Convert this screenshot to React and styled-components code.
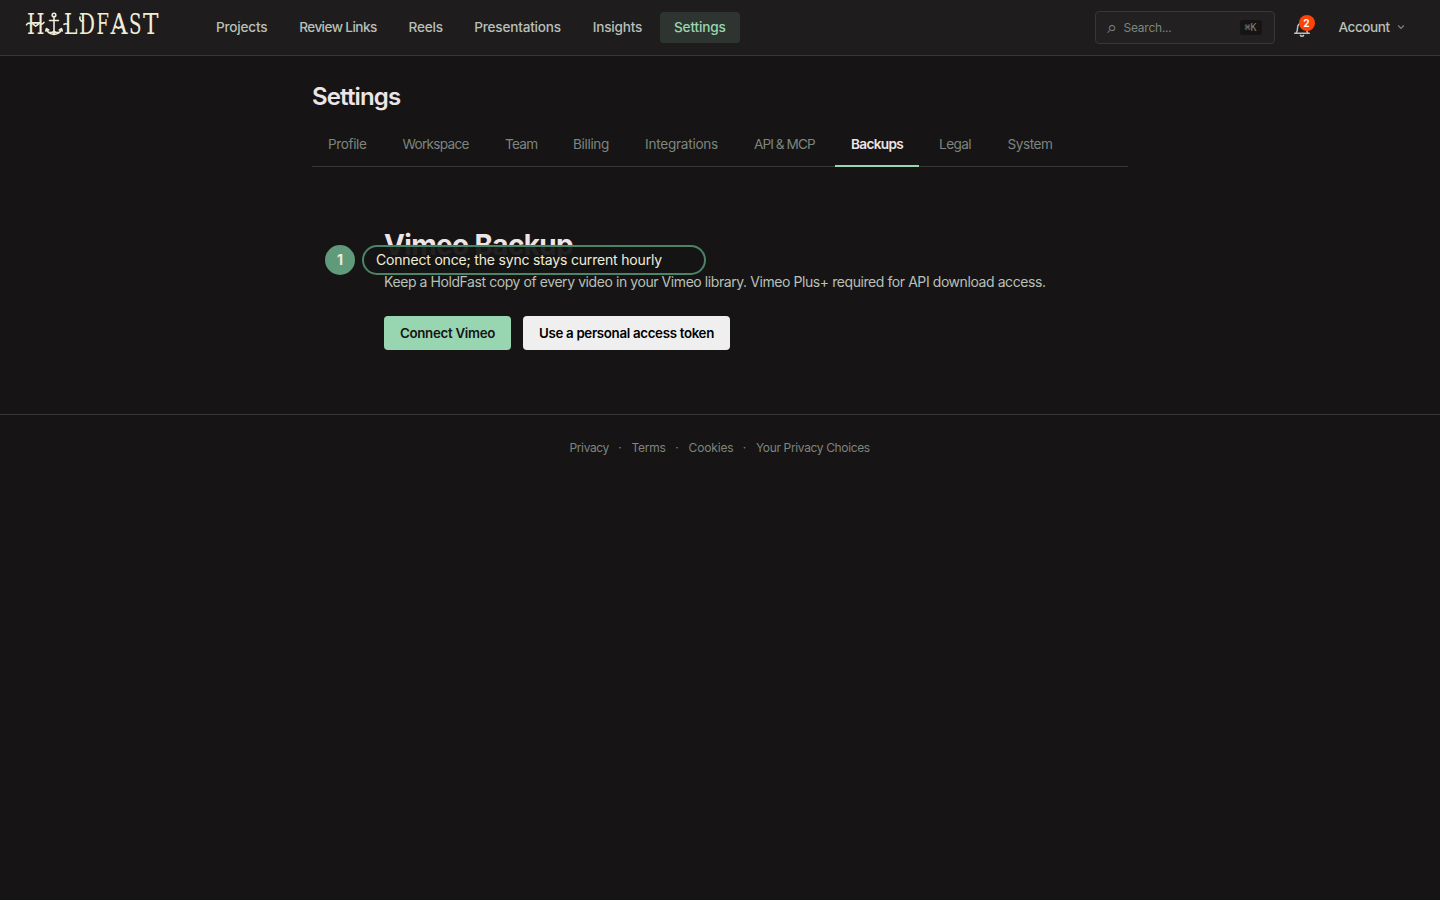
import React from 'react';
import styled, { createGlobalStyle } from 'styled-components';

const navItems = [
    { label: 'Projects', width: 51.2, track: -0.2 },
    { label: 'Review Links', width: 77.3, track: -0.58 },
    { label: 'Reels', width: 33.7, track: -0.2 },
    { label: 'Presentations', width: 86.6, track: -0.2 },
    { label: 'Insights', width: 49.2, track: -0.2 },
    { label: 'Settings', width: 52, track: -0.15, active: true },
];

const tabs = [
    { label: 'Profile', width: 38.5, track: -0.4 },
    { label: 'Workspace', width: 66.5, track: -0.7 },
    { label: 'Team', width: 32, track: -0.75 },
    { label: 'Billing', width: 36, track: -0.34 },
    { label: 'Integrations', width: 73, track: -0.26 },
    { label: 'API & MCP', width: 61, track: -0.92 },
    { label: 'Backups', width: 52, track: -0.66, active: true },
    { label: 'Legal', width: 32.5, track: -0.56 },
    { label: 'System', width: 45, track: -0.44 },
];

const footerLinks = [
    { label: 'Privacy', width: 39, track: -0.38 },
    { label: 'Terms', width: 34, track: -0.27 },
    { label: 'Cookies', width: 44.5, track: -0.14 },
    { label: 'Your Privacy Choices', width: 114.5, track: -0.36 },
];

// x position and width of each wordmark letter
const letters = [
    ['H', 27, 17.5],
    ['L', 64, 13.5],
    ['D', 79, 16],
    ['F', 96.5, 12.5],
    ['A', 110.5, 17],
    ['S', 129, 12.5],
    ['T', 143, 15.5],
];

const Logo = () => (
    <LogoSvg viewBox="24 8 138 32" aria-label="Holdfast">
        {letters.map(([char, x, width]) => (
            <text key={char} x={x} y="33.8" textLength={width} lengthAdjust="spacingAndGlyphs">
                {char}
            </text>
        ))}
        <g fill="none" stroke="#f0edd8" strokeWidth="1.6" strokeLinecap="round" strokeLinejoin="round">
            <circle cx="54" cy="15" r="1.8" />
            <path d="M54 17v17M49.5 20.5h9M46.5 29.2c1 3 4 4.8 7.5 5.2c3.5-.4 6.5-2.2 7.5-5.2" />
            <path d="M50 32.2c1.3.4 2.7.4 4-.8c1.300 1.200 2.700 1.200 4 .8" />
            <path d="M45.8 31l.7-2.4 2.2 1.4M62.2 31l-.7-2.4-2.2 1.4" />
            <path d="M26.5 24.8c1-1.6 2.4-2 4-1.200M33 24.200l2.700 2 2.700-2M40 23.600c1.600.9 3 .4 4-1.200" />
            <path d="M80 17c-.8 3 1.2 5.4 3.4 3.4M64 24.3c1.3-.8 2.4-.8 3.8 0M115 25.5l3.5 3 3.5-3" />
        </g>
    </LogoSvg>
);

const Bell = () => (
    <BellSvg viewBox="0 0 18 18">
        <path d="M1.7 13.2h14.6M3.2 13c1-1.2 1.3-2.5 1.3-4.8 0-3 1.6-5 4.5-5s4.5 2 4.5 5c0 2.3.3 3.6 1.3 4.8" />
        <path d="M7.4 15.4c.4 1 2.8 1 3.2 0" />
    </BellSvg>
);

const App = () => {
    return (
        <>
            <GlobalStyle />
            <Header>
                <Logo />
                <Nav>
                    {navItems.map((item) => (
                        <NavLink key={item.label} $active={item.active}>
                            <Label $width={item.width} $track={item.track}>{item.label}</Label>
                        </NavLink>
                    ))}
                </Nav>
                <SearchBox>
                    <SearchGlyph>⌕</SearchGlyph>
                    <SearchText>Search...</SearchText>
                    <Kbd>⌘K</Kbd>
                </SearchBox>
                <BellButton>
                    <Bell />
                    <Badge>2</Badge>
                </BellButton>
                <Account>
                    <Label $width={52.5} $track={-0.48}>Account</Label>
                    <svg width="8" height="6" viewBox="0 0 8 6" fill="none" stroke="#7d857e" strokeWidth="1.2">
                        <path d="M1.2 1.5l2.8 2.8 2.8-2.8" />
                    </svg>
                </Account>
            </Header>

            <Main>
                <PageTitle>Settings</PageTitle>
                <TabList>
                    {tabs.map((tab) => (
                        <Tab key={tab.label} $active={tab.active}>
                            <Label $width={tab.width} $track={tab.track}>{tab.label}</Label>
                        </Tab>
                    ))}
                </TabList>
                <Section>
                    <SectionTitle>Vimeo Backup</SectionTitle>
                    <Description>
                        Keep a HoldFast copy of every video in your Vimeo library. Vimeo Plus+ required for API download access.
                    </Description>
                    <Actions>
                        <Button $primary $width={127} $track={-0.3}>Connect Vimeo</Button>
                        <Button $width={207} $track={-0.32}>Use a personal access token</Button>
                    </Actions>
                    <Callout>
                        <StepNumber>1</StepNumber>
                        <CalloutText>Connect once; the sync stays current hourly</CalloutText>
                    </Callout>
                </Section>
            </Main>

            <Footer>
                {footerLinks.map((link, index) => (
                    <React.Fragment key={link.label}>
                        {index > 0 && <Dot>·</Dot>}
                        <Label $width={link.width} $track={link.track}>{link.label}</Label>
                    </React.Fragment>
                ))}
            </Footer>
        </>
    );
};

// Styled Components
const GlobalStyle = createGlobalStyle`
    * {
        box-sizing: border-box;
    }

    body {
        margin: 0;
        min-height: 100vh;
        background: #161415;
        color: #ece4e6;
        font-family: Inter, "Open Sans", sans-serif;
    }
`;

const Header = styled.header`
    display: flex;
    align-items: center;
    height: 56px;
    padding: 0 35px 0 24px;
    background: #1e1c1d;
    border-bottom: 1px solid #383637;
`;

const LogoSvg = styled.svg`
    width: 138px;
    height: 32px;
    margin: -7px 40px 0 0;
    flex: none;

    text {
        font-family: "DejaVu Serif", serif;
        font-size: 27.5px;
        fill: #f0edd8;
    }
`;

const Nav = styled.nav`
    display: flex;
    gap: 4px;
`;

const Label = styled.span`
    display: block;
    width: ${({ $width }) => $width}px;
    letter-spacing: ${({ $track }) => $track}px;
    white-space: nowrap;
`;

const NavLink = styled.a`
    display: flex;
    align-items: center;
    height: 31px;
    padding: 0 14px 2px;
    border-radius: 4px;
    font-size: 13.6px;
    font-weight: 500;
    color: ${({ $active }) => ($active ? '#98d6b1' : '#b8c0b9')};
    background: ${({ $active }) => ($active ? '#2e3530' : 'transparent')};
`;

const SearchBox = styled.div`
    display: flex;
    align-items: center;
    width: 180px;
    height: 33px;
    margin-left: auto;
    padding: 0 12px 0 11px;
    border: 1px solid #383637;
    border-radius: 4px;
    background: #222021;
    font-size: 12px;
    color: #7d857e;
`;

const SearchGlyph = styled.span`
    width: 17px;
    padding-bottom: 2px;
    font-family: "DejaVu Sans", sans-serif;
    font-size: 18px;
    line-height: 18px;
`;

const SearchText = styled.span`
    flex: 1;
    letter-spacing: -0.24px;
`;

const Kbd = styled.kbd`
    width: 22px;
    height: 15px;
    border-radius: 3px;
    background: #161415;
    font-family: "DejaVu Sans Mono", monospace;
    font-size: 10px;
    line-height: 15px;
    text-align: center;
`;

const BellButton = styled.div`
    position: relative;
    display: flex;
    margin: 3px 0 0 18px;
`;

const BellSvg = styled.svg`
    width: 18px;
    height: 18px;
    fill: none;
    stroke: #b8c0b9;
    stroke-width: 1.5;
    stroke-linecap: round;
`;

const Badge = styled.span`
    position: absolute;
    top: -5px;
    right: -4px;
    width: 16px;
    height: 16px;
    border-radius: 50%;
    background: #ff4207;
    color: #fff;
    font-size: 10px;
    font-weight: 700;
    line-height: 16px;
    text-align: center;
`;

const Account = styled.div`
    display: flex;
    align-items: center;
    gap: 6px;
    margin-left: 28px;
    padding-bottom: 1px;
    font-size: 13.6px;
    font-weight: 500;
    color: #b8c0b9;
`;

const Main = styled.main`
    width: 816px;
    margin: 0 auto;
    padding-top: 25px;
`;

const PageTitle = styled.h1`
    margin: 0;
    font-size: 24px;
    font-weight: 600;
    line-height: 32px;
    letter-spacing: -0.85px;
`;

const TabList = styled.div`
    display: flex;
    gap: 4px;
    height: 54px;
    border-bottom: 1px solid #383637;
`;

const Tab = styled.a`
    height: 54px;
    padding: 22px 16px 0;
    border-bottom: 2px solid ${({ $active }) => ($active ? '#98d6b1' : 'transparent')};
    font-size: 13.6px;
    font-weight: ${({ $active }) => ($active ? 600 : 400)};
    line-height: 18px;
    color: ${({ $active }) => ($active ? '#ece4e6' : '#7d857e')};
`;

const Section = styled.section`
    position: relative;
    padding: 60px 72px 64px;
`;

const SectionTitle = styled.h2`
    margin: 0;
    font-size: 28px;
    font-weight: 700;
    line-height: 36px;
    letter-spacing: -0.67px;
`;

const Description = styled.p`
    margin: 9px 0 24px;
    font-size: 14px;
    line-height: 20px;
    letter-spacing: -0.425px;
    white-space: nowrap;
    color: #b8c0b9;
`;

const Actions = styled.div`
    display: flex;
    gap: 12px;
`;

const Button = styled.button`
    width: ${({ $width }) => $width}px;
    height: 34px;
    padding: 0;
    border: 0;
    border-radius: 4px;
    background: ${({ $primary }) => ($primary ? '#98d6b1' : '#efefef')};
    color: ${({ $primary }) => ($primary ? '#161415' : '#000')};
    font-family: inherit;
    font-size: 13.3px;
    font-weight: 600;
    letter-spacing: ${({ $track }) => $track}px;
    white-space: nowrap;
`;

/* Sits over the section heading */
const Callout = styled.div`
    position: absolute;
    top: 78px;
    left: 13px;
    display: flex;
    gap: 7px;
`;

const StepNumber = styled.div`
    width: 30px;
    height: 30px;
    border-radius: 50%;
    background: #5f9a7a;
    color: #f0edd8;
    font-size: 14px;
    font-weight: 700;
    line-height: 30px;
    text-align: center;
`;

const CalloutText = styled.div`
    width: 344px;
    height: 30px;
    padding-left: 12px;
    border: 2px solid #4d8367;
    border-radius: 15px;
    background: rgba(20, 20, 20, 0.94);
    color: #f0edd8;
    font-size: 14px;
    line-height: 26px;
    letter-spacing: -0.18px;
    white-space: nowrap;
`;

const Footer = styled.footer`
    display: flex;
    justify-content: center;
    padding-top: 24px;
    border-top: 1px solid #383637;
    font-size: 12px;
    line-height: 18px;
    color: #7d857e;
`;

const Dot = styled.span`
    width: 23px;
    text-align: center;
`;

export default App;
